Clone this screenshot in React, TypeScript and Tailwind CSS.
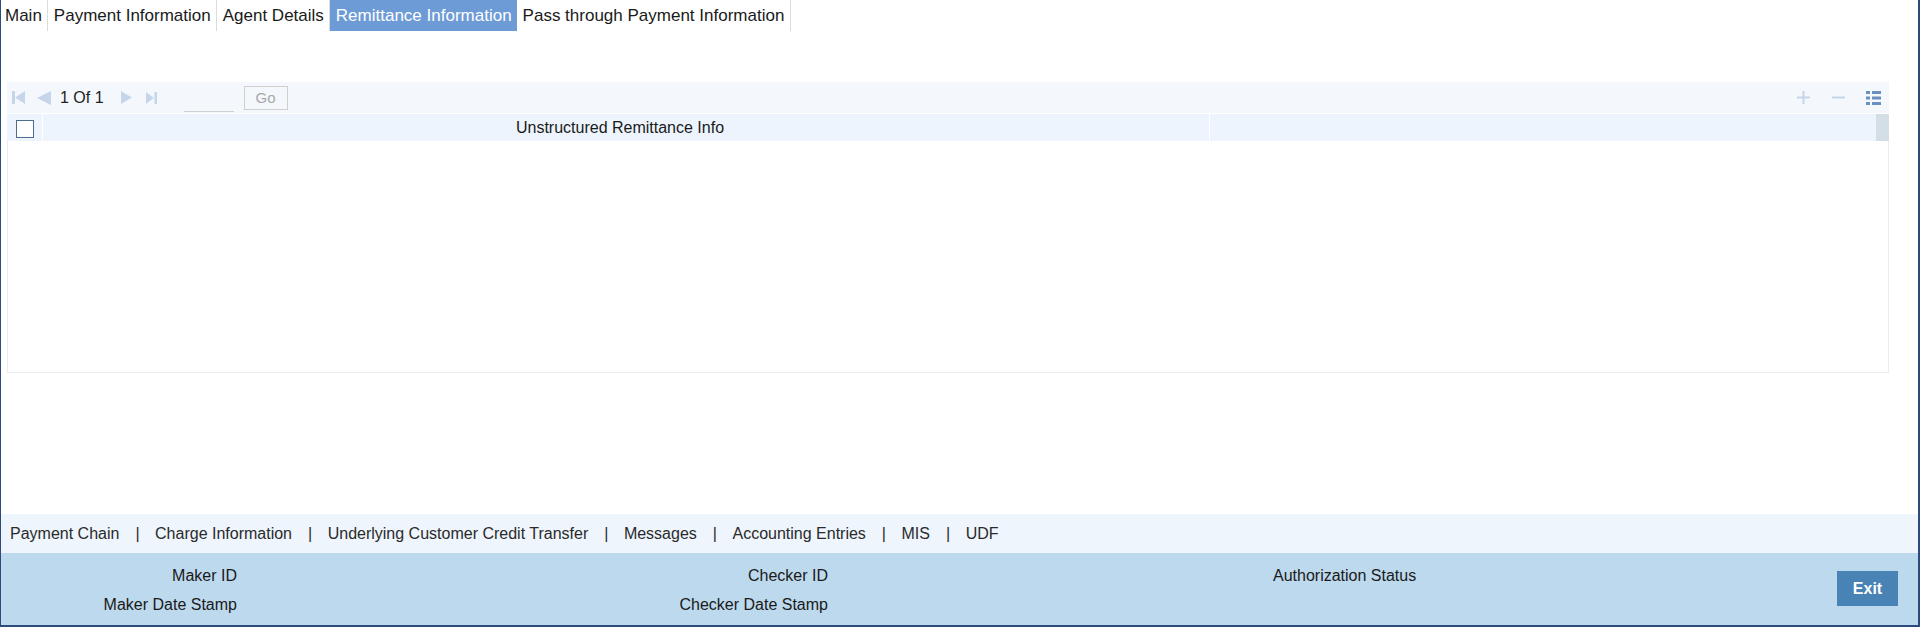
import React from "react";

const tabs = ["Main", "Payment Information", "Agent Details", "Remittance Information", "Pass through Payment Information"];
const links = ["Payment Chain", "Charge Information", "Underlying Customer Credit Transfer", "Messages", "Accounting Entries", "MIS", "UDF"];

function NavIcon({ kind }: { kind: "first" | "prev" | "next" | "last" }) {
  const c = "#c6d6ea";
  if (kind === "first")
    return (
      <svg width="13" height="13" viewBox="0 0 13 13">
        <rect x="0" y="0" width="3" height="13" fill={c} />
        <path d="M13 0 L3 6.5 L13 13 Z" fill={c} />
      </svg>
    );
  if (kind === "prev")
    return (
      <svg width="14" height="14" viewBox="0 0 14 14">
        <path d="M14 0 L0 7 L14 14 Z" fill={c} />
      </svg>
    );
  if (kind === "next")
    return (
      <svg width="11" height="13" viewBox="0 0 11 13">
        <path d="M0 0 L11 6.5 L0 13 Z" fill={c} />
      </svg>
    );
  return (
    <svg width="11" height="12" viewBox="0 0 11 12">
      <path d="M0 0 L8 6 L0 12 Z" fill={c} />
      <rect x="8.5" y="0" width="2.5" height="12" fill={c} />
    </svg>
  );
}

export default function App() {
  return (
    <div className="h-[627px] w-full flex flex-col bg-white border-l border-r-2 border-b-2 border-[#2c4a7c] font-['Liberation_Sans',Arial,sans-serif] text-[#1a1a1a] overflow-hidden">
      {/* tabs */}
      <div className="flex h-[31px] text-[17px] leading-[31px]">
        {tabs.map((t, i) => (
          <div
            key={t}
            className={
              t === "Remittance Information"
                ? "px-[5.5px] bg-[#6d9bd6] text-white"
                : i === 0
                ? "pl-[4px] pr-[5.5px] border-r border-[#dcdcdc]"
                : "px-[5.5px] border-r border-[#dcdcdc]"
            }
          >
            {t}
          </div>
        ))}
      </div>

      {/* grid */}
      <div className="mt-[51px] ml-[6px] mr-[29px]">
        <div className="h-[31px] bg-[#f4f8fd] flex items-center text-[16px]">
          <div className="ml-[5px] flex items-center">
            <NavIcon kind="first" />
          </div>
          <div className="ml-[12px] flex items-center">
            <NavIcon kind="prev" />
          </div>
          <span className="ml-[9px] text-[#222]">1 Of 1</span>
          <div className="ml-[17px] flex items-center">
            <NavIcon kind="next" />
          </div>
          <div className="ml-[14px] flex items-center">
            <NavIcon kind="last" />
          </div>
          <div className="ml-[27px] w-[50px] h-[24px] mt-[4px] border-b border-[#cfcfcf]" />
          <button className="ml-[10px] w-[44px] h-[24px] border border-[#cfcfcf] text-[#a8a8a8] font-normal text-[15px] leading-[22px]">Go</button>
          <div className="ml-auto flex items-center">
            <svg width="13" height="13" viewBox="0 0 13 13">
              <rect x="5.5" y="0" width="2" height="13" fill="#c6d6ea" />
              <rect x="0" y="5.5" width="13" height="2" fill="#c6d6ea" />
            </svg>
            <svg className="ml-[22px]" width="13" height="13" viewBox="0 0 13 13">
              <rect x="0" y="5.5" width="13" height="2" fill="#c6d6ea" />
            </svg>
            <svg className="ml-[21px] mr-[8px]" width="15" height="14" viewBox="0 0 15 14">
              <rect x="0" y="0" width="4" height="3" fill="#6a90c2" />
              <rect x="6" y="0" width="9" height="3" fill="#6a90c2" />
              <rect x="0" y="5.5" width="4" height="3" fill="#6a90c2" />
              <rect x="6" y="5.5" width="9" height="3" fill="#6a90c2" />
              <rect x="0" y="11" width="4" height="3" fill="#6a90c2" />
              <rect x="6" y="11" width="9" height="3" fill="#6a90c2" />
            </svg>
          </div>
        </div>
        <div className="h-[28px] flex border-t border-white bg-[#edf4fd] text-[16px]">
          <div className="w-[36px] flex items-center justify-center border-r border-white">
            <div className="w-[18px] h-[18px] mt-[2px] border border-[#4d6d8c] bg-white" />
          </div>
          <div className="w-[1167px] pr-[12px] flex items-center justify-center border-r border-white">Unstructured Remittance Info</div>
          <div className="flex-1" />
          <div className="w-[13px] bg-[#d3dfe4]" />
        </div>
        <div className="h-[232px] bg-white border-l border-r border-b border-[#e8edf3]" />
      </div>

      <div className="flex-1" />

      {/* links bar */}
      <div className="h-[39px] bg-[#eef5fd] flex items-center pl-[9px] text-[16px] text-[#2a2a2a]">
        {links.map((l, i) => (
          <React.Fragment key={l}>
            {i > 0 && <span className="ml-[16px] mr-[15.5px]">|</span>}
            <span>{l}</span>
          </React.Fragment>
        ))}
      </div>

      {/* footer */}
      <div className="h-[72px] bg-[#bdd9ed] flex text-[16px] leading-[20px] text-[#1a1a1a]">
        <div className="w-[236px] pt-[13px] flex flex-col gap-[9px] items-end">
          <span>Maker ID</span>
          <span>Maker Date Stamp</span>
        </div>
        <div className="w-[591px] pt-[13px] flex flex-col gap-[9px] items-end">
          <span>Checker ID</span>
          <span>Checker Date Stamp</span>
        </div>
        <div className="ml-[445px] pt-[13px]">
          <span>Authorization Status</span>
        </div>
        <button className="ml-auto mr-[20px] mt-[18px] w-[61px] h-[35px] bg-[#4982b4] text-white font-bold text-[16px]">Exit</button>
      </div>
    </div>
  );
}
